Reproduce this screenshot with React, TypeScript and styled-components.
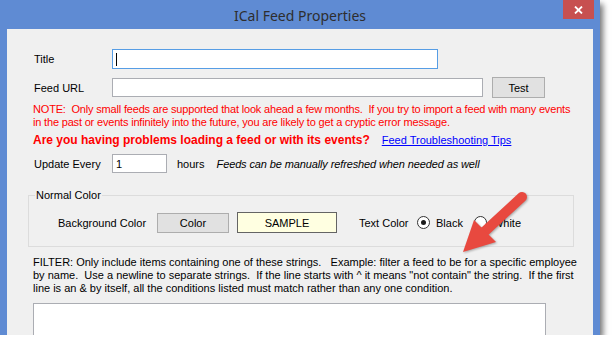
import React from "react";
import styled, { createGlobalStyle } from "styled-components";

const GlobalStyle = createGlobalStyle`
  body {
    margin: 0;
    background: #fff;
    font-family: "Liberation Sans", Arial, sans-serif;
    font-size: 11px;
    color: #000;
  }
`;

const Window = styled.div`
  width: 600px;
  height: 335px;
  background: #5f8bd3;
  display: flex;
  flex-direction: column;
  box-shadow: 3px 4px 6px rgba(0, 0, 0, 0.55);
`;

const TitleBar = styled.header`
  height: 29px;
  display: grid;
  grid-template-columns: 1fr auto 1fr;
`;

const Caption = styled.div`
  grid-column: 2;
  padding-top: 8px;
  font-family: "Noto Sans", "Open Sans", sans-serif;
  font-size: 14px;
  line-height: 16px;
  color: #2e2e2e;
`;

const CloseButton = styled.div`
  grid-column: 3;
  justify-self: end;
  width: 31px;
  height: 19px;
  margin-right: 6px;
  background: #c75050;
  display: flex;
  align-items: center;
  justify-content: center;
`;

const Client = styled.main`
  flex: 1;
  margin: 0 7px;
  padding: 20px 0 0 26px;
  background: #f0f0f0;
  position: relative;
  overflow: hidden;
`;

const Row = styled.div<{ $top: number }>`
  display: flex;
  align-items: center;
  margin-top: ${(p) => p.$top}px;
`;

const Label = styled.span<{ $w?: number }>`
  box-sizing: border-box;
  width: ${(p) => (p.$w ? `${p.$w}px` : "auto")};
  padding-left: 1px;
  white-space: pre;
  flex-shrink: 0;
`;

const TextBox = styled.div<{ $w: number; $h?: number; $focused?: boolean }>`
  box-sizing: border-box;
  width: ${(p) => p.$w}px;
  height: ${(p) => p.$h ?? 19}px;
  padding: 0 3px;
  border: 1px solid ${(p) => (p.$focused ? "#569de5" : "#abadb3")};
  background: #fff;
  display: flex;
  align-items: center;
`;

const Caret = styled.span`
  width: 1px;
  height: 13px;
  background: #000;
`;

const Button = styled.div<{ $w: number; $h: number; $ml: number }>`
  box-sizing: border-box;
  width: ${(p) => p.$w}px;
  height: ${(p) => p.$h}px;
  margin-left: ${(p) => p.$ml}px;
  border: 1px solid #adadad;
  background: #e1e1e1;
  display: flex;
  align-items: center;
  justify-content: center;
`;

const Note = styled.p<{ $top: number; $color: string; $tight?: boolean }>`
  margin: ${(p) => p.$top}px 0 0;
  line-height: 13px;
  white-space: pre;
  color: ${(p) => p.$color};
  letter-spacing: ${(p) => (p.$tight ? "-0.18px" : "0")};
`;

const Help = styled.div`
  margin-top: 4px;
  display: flex;
  align-items: baseline;
  line-height: 14px;
`;

const Warning = styled.span`
  color: #f00;
  font-weight: bold;
  font-size: 12px;
`;

const Link = styled.a`
  margin-left: 12px;
  color: #00f;
  text-decoration: underline;
`;

const Hint = styled.span`
  margin-left: 12px;
  font-style: italic;
  letter-spacing: -0.12px;
`;

const GroupBox = styled.fieldset`
  box-sizing: border-box;
  width: 546px;
  margin: 16px 0 0 -5px;
  padding: 10px 0 13px 6px;
  border: 1px solid #dcdcdc;
`;

const Legend = styled.legend`
  padding: 0 1px;
  line-height: 13px;
`;

const GroupRow = styled.div`
  display: flex;
  align-items: center;
  padding-left: 22px;
`;

const Sample = styled.div`
  box-sizing: border-box;
  width: 100px;
  height: 21px;
  margin-left: 8px;
  border: 1px solid #646464;
  background: #ffffe1;
  display: flex;
  align-items: center;
  justify-content: center;
`;

const RadioItem = styled.label<{ $ml: number }>`
  display: flex;
  align-items: center;
  gap: 6px;
  margin-left: ${(p) => p.$ml}px;
`;

const RadioDot = styled.span<{ $checked?: boolean }>`
  box-sizing: border-box;
  width: 13px;
  height: 13px;
  border: 1px solid #333;
  border-radius: 50%;
  background: #fff;
  display: flex;
  align-items: center;
  justify-content: center;
  &::after {
    content: "";
    width: 5px;
    height: 5px;
    border-radius: 50%;
    background: ${(p) => (p.$checked ? "#1a1a1a" : "transparent")};
  }
`;

const FilterBox = styled.div`
  box-sizing: border-box;
  width: 513px;
  height: 60px;
  margin-top: 8px;
  border: 1px solid #abadb3;
  background: #fff;
`;

const Overlay = styled.svg`
  position: absolute;
  left: 0;
  top: 0;
  pointer-events: none;
  filter: drop-shadow(1px 1px 1px rgba(0, 0, 0, 0.3));
`;

const noteText =
  "NOTE:  Only small feeds are supported that look ahead a few months.  If you try to import a feed with many events\nin the past or events infinitely into the future, you are likely to get a cryptic error message.";

const filterText =
  'FILTER: Only include items containing one of these strings.   Example: filter a feed to be for a specific employee\nby name.  Use a newline to separate strings.  If the line starts with ^ it means "not contain" the string.  If the first\nline is an & by itself, all the conditions listed must match rather than any one condition.';

export default function App() {
  return (
    <>
      <GlobalStyle />
      <Window>
        <TitleBar>
          <Caption>ICal Feed Properties</Caption>
          <CloseButton>
            <svg width="9" height="8" viewBox="0 0 9 8">
              <path d="M1 0.5 L8 7.5 M8 0.5 L1 7.5" stroke="#fff" strokeWidth="1.8" />
            </svg>
          </CloseButton>
        </TitleBar>
        <Client>
          <Row $top={0}>
            <Label $w={79}>Title</Label>
            <TextBox $w={326} $h={20} $focused>
              <Caret />
            </TextBox>
          </Row>
          <Row $top={8}>
            <Label $w={79}>Feed URL</Label>
            <TextBox $w={371} />
            <Button $w={53} $h={21} $ml={9}>Test</Button>
          </Row>
          <Note $top={5} $color="#f00" $tight>{noteText}</Note>
          <Help>
            <Warning>Are you having problems loading a feed or with its events?</Warning>
            <Link>Feed Troubleshooting Tips</Link>
          </Help>
          <Row $top={7}>
            <Label $w={79}>Update Every</Label>
            <TextBox $w={55}>1</TextBox>
            <Label style={{ marginLeft: 9 }}>hours</Label>
            <Hint>Feeds can be manually refreshed when needed as well</Hint>
          </Row>
          <GroupBox>
            <Legend>Normal Color</Legend>
            <GroupRow>
              <Label $w={100}>Background Color</Label>
              <Button $w={72} $h={20} $ml={0}>Color</Button>
              <Sample>SAMPLE</Sample>
              <Label $w={59} style={{ marginLeft: 21 }}>Text Color</Label>
              <RadioItem $ml={0}>
                <RadioDot $checked />
                Black
              </RadioItem>
              <RadioItem $ml={11}>
                <RadioDot />
                White
              </RadioItem>
            </GroupRow>
          </GroupBox>
          <Note $top={9} $color="#000">{filterText}</Note>
          <FilterBox />
          <Overlay width="586" height="306" viewBox="0 0 586 306">
            <line x1="515" y1="168" x2="476" y2="204" stroke="#e8493f" strokeWidth="10" strokeLinecap="round" />
            <polygon points="456,223 467,191 489,213" fill="#e8493f" />
          </Overlay>
        </Client>
      </Window>
    </>
  );
}
